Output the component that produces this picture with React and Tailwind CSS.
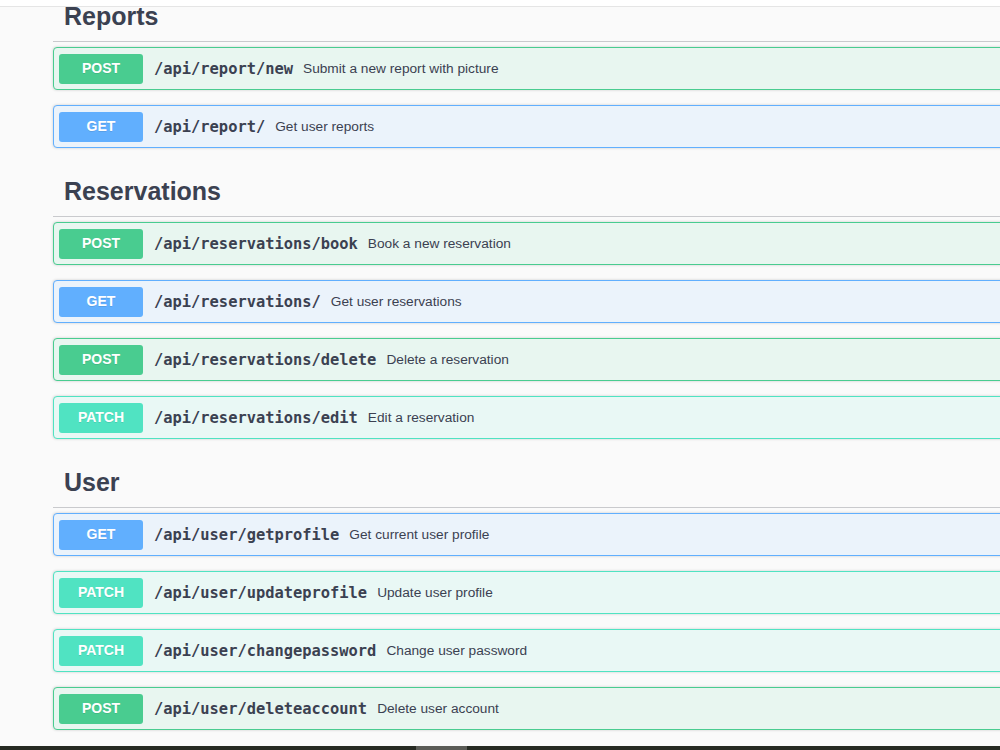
import React from "react";

const styles = {
  POST: { box: "border-[#49cc90] bg-[#e8f6f0]", badge: "bg-[#49cc90]" },
  GET: { box: "border-[#61affe] bg-[#ebf3fb]", badge: "bg-[#61affe]" },
  PATCH: { box: "border-[#50e3c2] bg-[#e9f8f5]", badge: "bg-[#50e3c2]" },
};

const sections = [
  {
    title: "Reports",
    ops: [
      ["POST", "/api/report/new", "Submit a new report with picture"],
      ["GET", "/api/report/", "Get user reports"],
    ],
  },
  {
    title: "Reservations",
    ops: [
      ["POST", "/api/reservations/book", "Book a new reservation"],
      ["GET", "/api/reservations/", "Get user reservations"],
      ["POST", "/api/reservations/delete", "Delete a reservation"],
      ["PATCH", "/api/reservations/edit", "Edit a reservation"],
    ],
  },
  {
    title: "User",
    ops: [
      ["GET", "/api/user/getprofile", "Get current user profile"],
      ["PATCH", "/api/user/updateprofile", "Update user profile"],
      ["PATCH", "/api/user/changepassword", "Change user password"],
      ["POST", "/api/user/deleteaccount", "Delete user account"],
    ],
  },
];

function Op({ method, path, desc }) {
  const s = styles[method];
  return (
    <div
      className={`flex items-center h-[43px] w-[960px] mb-[15px] border rounded-[4px] shadow-[0_0_3px_rgba(0,0,0,0.19)] px-[5px] ${s.box}`}
    >
      <div
        className={`w-[84px] h-[30px] rounded-[3px] flex items-center justify-center text-white font-bold text-[14px] [text-shadow:0_1px_0_rgba(0,0,0,0.1)] ${s.badge}`}
      >
        {method}
      </div>
      <span className="pl-[11px] pr-[10px] pt-[2px] font-['DejaVu_Sans_Mono',monospace] font-bold text-[15.4px] text-[#3b4151]">
        {path}
      </span>
      <span className="pt-[1px] text-[13.7px] text-[#3b4151]">{desc}</span>
    </div>
  );
}

export default function App() {
  return (
    <div className="relative w-[1000px] h-[750px] overflow-hidden bg-[#fafafa] font-['Liberation_Sans',Arial,sans-serif]">
      <div className="absolute top-0 left-0 right-0 h-[7px] bg-white border-b border-[#e5e5e5] z-10" />
      <div className="-mt-[12px] pl-[53px]">
        {sections.map((sec) => (
          <div key={sec.title}>
            <div className="w-[960px] h-[54px] border-b border-[#c9cacd] pl-[11px] pt-[13px] mb-[5px]">
              <h3 className="text-[25px] leading-[30px] font-bold text-[#3b4151]">{sec.title}</h3>
            </div>
            {sec.ops.map(([m, p, d]) => (
              <Op key={p + m} method={m} path={p} desc={d} />
            ))}
          </div>
        ))}
      </div>
      <div className="absolute bottom-0 left-0 right-0 h-[4px] bg-[#262a22] flex">
        <div className="ml-[416px] w-[51px] h-full bg-[#5a5b56]" />
      </div>
    </div>
  );
}
